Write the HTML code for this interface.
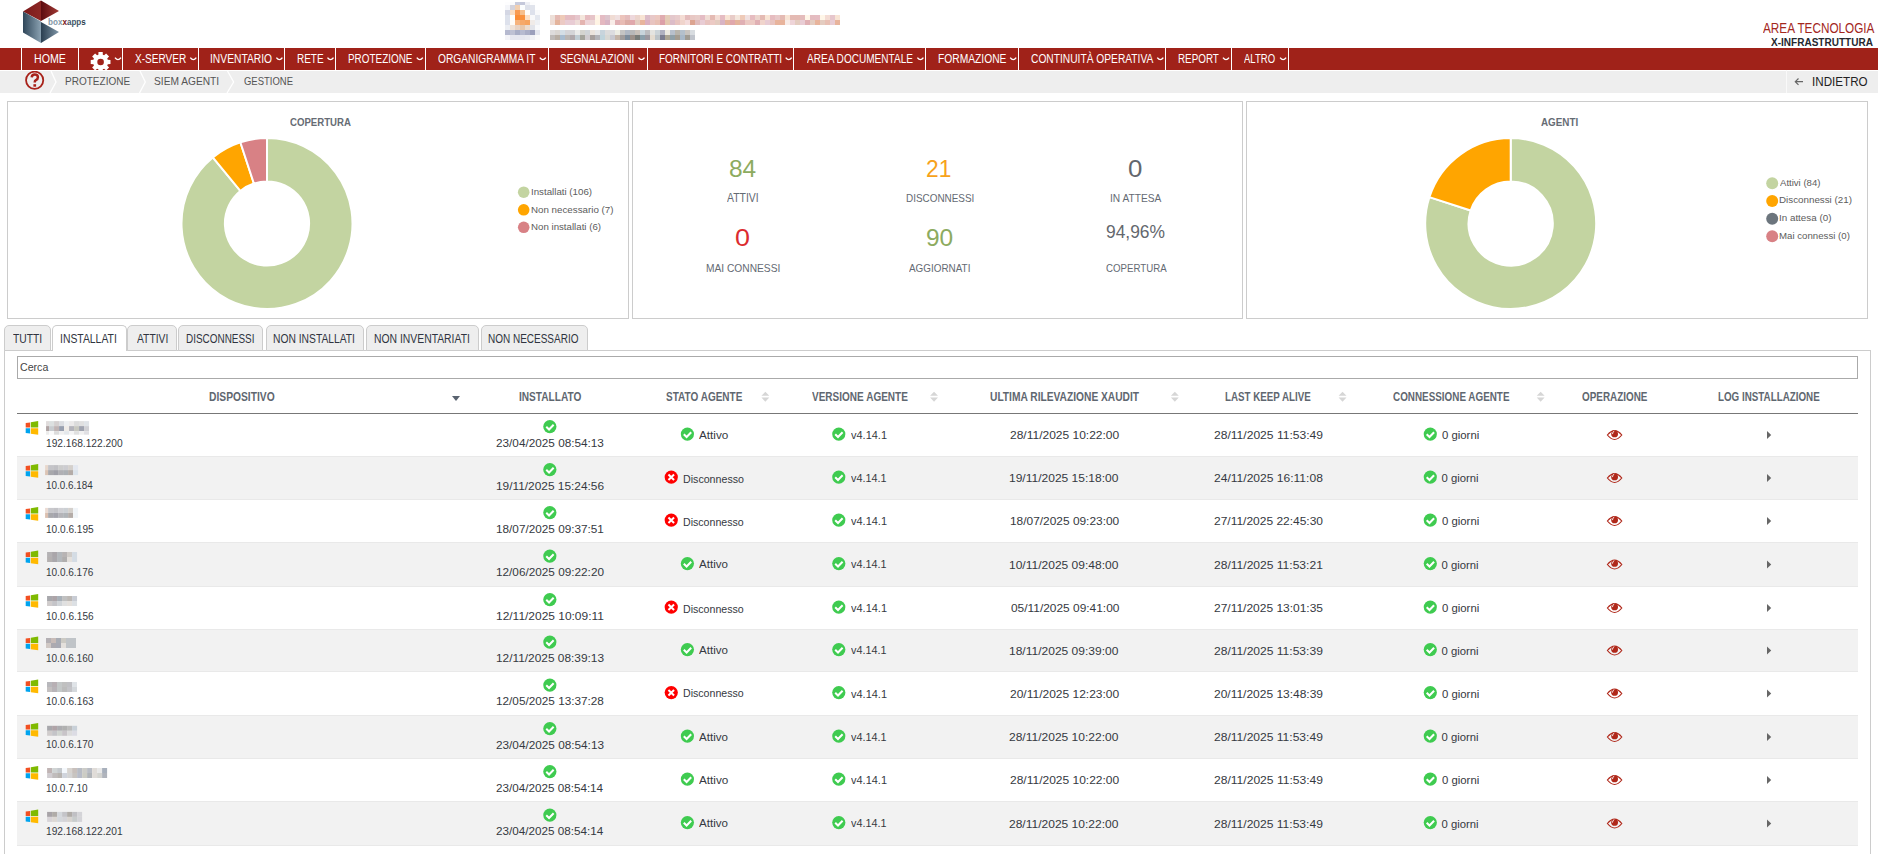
<!DOCTYPE html><html><head><meta charset="utf-8"><style>
html,body{margin:0;padding:0;background:#fff;width:1878px;height:854px;overflow:hidden;position:relative}
.t{position:absolute;white-space:nowrap;font-family:"Liberation Sans",sans-serif;transform-origin:0 0}
</style></head><body>
<svg style="position:absolute;left:0;top:0" width="100" height="48" viewBox="0 0 100 48">
<defs>
<linearGradient id="gl" x1="0" y1="0" x2="1" y2="0"><stop offset="0" stop-color="#2f4659"/><stop offset="1" stop-color="#8aa1b1"/></linearGradient>
<linearGradient id="gr" x1="0" y1="0" x2="1" y2="0"><stop offset="0" stop-color="#2a3e50"/><stop offset="1" stop-color="#8097a8"/></linearGradient>
<linearGradient id="rl" x1="0" y1="0" x2="1" y2="0"><stop offset="0" stop-color="#7a191a"/><stop offset="1" stop-color="#8c2725"/></linearGradient>
<linearGradient id="rr" x1="0" y1="0" x2="1" y2="0"><stop offset="0" stop-color="#5c0c10"/><stop offset="1" stop-color="#a33a35"/></linearGradient>
</defs>
<polygon points="23,11.5 41,0.5 41,21" fill="url(#rl)"/>
<polygon points="41,0.5 59,11 41,21" fill="url(#rr)"/>
<polygon points="23,11.5 41,21.5 41,43 23,32.5" fill="url(#gl)"/>
<polygon points="41,22 59,32 41,43" fill="url(#gr)"/>
</svg>
<div class="t" style="left:48.00px;top:18.26px;font-size:8.90px;line-height:8.90px;font-weight:bold;color:#4d6475;transform:scaleX(0.9121);"><span style="color:#8499a8">box</span><span style="color:#7a1414">x</span><span style="color:#3f5669">app</span><span style="color:#2a3d4d">s</span></div>
<svg style="position:absolute;left:0;top:0" width="900" height="48" shape-rendering="crispEdges"><rect x="505" y="2" width="5" height="3" fill="#fdfdfe"/><rect x="510" y="2" width="5" height="3" fill="#fbfbfc"/><rect x="515" y="2" width="5" height="3" fill="#c8cbdc"/><rect x="520" y="2" width="5" height="3" fill="#c4c8da"/><rect x="525" y="2" width="5" height="3" fill="#eef0f5"/><rect x="530" y="2" width="5" height="3" fill="#fdfdfd"/><rect x="535" y="2" width="5" height="3" fill="#ffffff"/><rect x="505" y="5" width="5" height="5" fill="#f4f5f9"/><rect x="510" y="5" width="5" height="5" fill="#d4d3dc"/><rect x="515" y="5" width="5" height="5" fill="#f2cfb0"/><rect x="520" y="5" width="5" height="5" fill="#fbfdfd"/><rect x="525" y="5" width="5" height="5" fill="#dde1ea"/><rect x="530" y="5" width="5" height="5" fill="#e1e4ec"/><rect x="535" y="5" width="5" height="5" fill="#ffffff"/><rect x="505" y="10" width="5" height="5" fill="#d4d7e4"/><rect x="510" y="10" width="5" height="5" fill="#fbdcc0"/><rect x="515" y="10" width="5" height="5" fill="#f99a50"/><rect x="520" y="10" width="5" height="5" fill="#f6bf8c"/><rect x="525" y="10" width="5" height="5" fill="#fffdfa"/><rect x="530" y="10" width="5" height="5" fill="#dde1ec"/><rect x="535" y="10" width="5" height="5" fill="#f8f9fb"/><rect x="505" y="15" width="5" height="5" fill="#dde2ec"/><rect x="510" y="15" width="5" height="5" fill="#fffefc"/><rect x="515" y="15" width="5" height="5" fill="#fb8c35"/><rect x="520" y="15" width="5" height="5" fill="#f9923e"/><rect x="525" y="15" width="5" height="5" fill="#fce0c6"/><rect x="530" y="15" width="5" height="5" fill="#f8f9fb"/><rect x="535" y="15" width="5" height="5" fill="#e3e7ef"/><rect x="505" y="20" width="5" height="5" fill="#dde1ec"/><rect x="510" y="20" width="5" height="5" fill="#fffcf7"/><rect x="515" y="20" width="5" height="5" fill="#f6b37c"/><rect x="520" y="20" width="5" height="5" fill="#f6a96a"/><rect x="525" y="20" width="5" height="5" fill="#f6a45f"/><rect x="530" y="20" width="5" height="5" fill="#f0ebe8"/><rect x="535" y="20" width="5" height="5" fill="#eef0f4"/><rect x="505" y="25" width="5" height="5" fill="#eceef3"/><rect x="510" y="25" width="5" height="5" fill="#efe2d7"/><rect x="515" y="25" width="5" height="5" fill="#e8d3c3"/><rect x="520" y="25" width="5" height="5" fill="#e8c8ac"/><rect x="525" y="25" width="5" height="5" fill="#ecdccf"/><rect x="530" y="25" width="5" height="5" fill="#e2e4ea"/><rect x="535" y="25" width="5" height="5" fill="#f8f9fb"/><rect x="505" y="30" width="5" height="5" fill="#b5b9cf"/><rect x="510" y="30" width="5" height="5" fill="#bec1d3"/><rect x="515" y="30" width="5" height="5" fill="#a9aec6"/><rect x="520" y="30" width="5" height="5" fill="#b7bbd0"/><rect x="525" y="30" width="5" height="5" fill="#abafc7"/><rect x="530" y="30" width="5" height="5" fill="#9b9fbb"/><rect x="535" y="30" width="5" height="5" fill="#e4e6ee"/><rect x="505" y="35" width="5" height="5" fill="#f3f3f7"/><rect x="510" y="35" width="5" height="5" fill="#e6e7ef"/><rect x="515" y="35" width="5" height="5" fill="#e6e7ef"/><rect x="520" y="35" width="5" height="5" fill="#e6e7ef"/><rect x="525" y="35" width="5" height="5" fill="#e9eaf0"/><rect x="530" y="35" width="5" height="5" fill="#f0f1f5"/><rect x="535" y="35" width="5" height="5" fill="#fafafa"/><rect x="550" y="15" width="5" height="5" fill="#eddfd8"/><rect x="550" y="20" width="5" height="5" fill="#eedcd4"/><rect x="555" y="15" width="5" height="5" fill="#e4bab3"/><rect x="555" y="20" width="5" height="5" fill="#e4b49c"/><rect x="560" y="15" width="5" height="5" fill="#eecab8"/><rect x="560" y="20" width="5" height="5" fill="#eccac4"/><rect x="565" y="15" width="5" height="5" fill="#e5bcc2"/><rect x="565" y="20" width="5" height="5" fill="#e8ccd4"/><rect x="570" y="15" width="5" height="5" fill="#e4bcc0"/><rect x="570" y="20" width="5" height="5" fill="#e8ccd4"/><rect x="575" y="15" width="5" height="5" fill="#e6c6cc"/><rect x="575" y="20" width="5" height="5" fill="#eedcd8"/><rect x="580" y="15" width="5" height="5" fill="#f4e6dc"/><rect x="580" y="20" width="5" height="5" fill="#e4b4b0"/><rect x="585" y="15" width="5" height="5" fill="#e6bcc0"/><rect x="585" y="20" width="5" height="5" fill="#eed4d8"/><rect x="590" y="15" width="5" height="5" fill="#e6c4c8"/><rect x="590" y="20" width="5" height="5" fill="#ecd8d8"/><rect x="595" y="15" width="5" height="5" fill="#fff6e8"/><rect x="595" y="20" width="5" height="5" fill="#fff4e4"/><rect x="600" y="15" width="5" height="5" fill="#e4bcc4"/><rect x="600" y="20" width="5" height="5" fill="#e4b8c0"/><rect x="605" y="15" width="5" height="5" fill="#dcc4cc"/><rect x="605" y="20" width="5" height="5" fill="#d8b4c4"/><rect x="610" y="15" width="5" height="5" fill="#f0dcd4"/><rect x="610" y="20" width="5" height="5" fill="#f8ece8"/><rect x="615" y="15" width="5" height="5" fill="#f0e0e0"/><rect x="615" y="20" width="5" height="5" fill="#e0b0b4"/><rect x="620" y="15" width="5" height="5" fill="#ecc4bc"/><rect x="620" y="20" width="5" height="5" fill="#e8bcb4"/><rect x="625" y="15" width="5" height="5" fill="#e4bcbc"/><rect x="625" y="20" width="5" height="5" fill="#dcaca4"/><rect x="630" y="15" width="5" height="5" fill="#eed8dc"/><rect x="630" y="20" width="5" height="5" fill="#e0a8ac"/><rect x="635" y="15" width="5" height="5" fill="#ecd4cc"/><rect x="635" y="20" width="5" height="5" fill="#e4ccc0"/><rect x="640" y="15" width="5" height="5" fill="#f8e4d4"/><rect x="640" y="20" width="5" height="5" fill="#e8b49c"/><rect x="645" y="15" width="5" height="5" fill="#dcbcc8"/><rect x="645" y="20" width="5" height="5" fill="#dcb0c0"/><rect x="650" y="15" width="5" height="5" fill="#e8c8c8"/><rect x="650" y="20" width="5" height="5" fill="#e8c4c0"/><rect x="655" y="15" width="5" height="5" fill="#ecc8c0"/><rect x="655" y="20" width="5" height="5" fill="#e8c0b4"/><rect x="660" y="15" width="5" height="5" fill="#e0acb0"/><rect x="660" y="20" width="5" height="5" fill="#dca0a8"/><rect x="665" y="15" width="5" height="5" fill="#e4ccb8"/><rect x="665" y="20" width="5" height="5" fill="#e4c8b0"/><rect x="670" y="15" width="5" height="5" fill="#e4c8cc"/><rect x="670" y="20" width="5" height="5" fill="#dcbcc8"/><rect x="675" y="15" width="5" height="5" fill="#e8cccc"/><rect x="675" y="20" width="5" height="5" fill="#e8c4c0"/><rect x="680" y="15" width="5" height="5" fill="#f4dcd4"/><rect x="680" y="20" width="5" height="5" fill="#f0d4cc"/><rect x="685" y="15" width="5" height="5" fill="#e4bcbc"/><rect x="685" y="20" width="5" height="5" fill="#f4dcdc"/><rect x="690" y="15" width="5" height="5" fill="#e8c8c4"/><rect x="690" y="20" width="5" height="5" fill="#dca490"/><rect x="695" y="15" width="5" height="5" fill="#e8ccc8"/><rect x="695" y="20" width="5" height="5" fill="#e0bcbc"/><rect x="700" y="15" width="5" height="5" fill="#e4bcc4"/><rect x="700" y="20" width="5" height="5" fill="#e8ccd4"/><rect x="705" y="15" width="5" height="5" fill="#f0dcd4"/><rect x="705" y="20" width="5" height="5" fill="#e8c4c0"/><rect x="710" y="15" width="5" height="5" fill="#e4bab3"/><rect x="710" y="20" width="5" height="5" fill="#eccac4"/><rect x="715" y="15" width="5" height="5" fill="#f4dcd4"/><rect x="715" y="20" width="5" height="5" fill="#e4ccc0"/><rect x="720" y="15" width="5" height="5" fill="#e5bcc2"/><rect x="720" y="20" width="5" height="5" fill="#d8b4c4"/><rect x="725" y="15" width="5" height="5" fill="#f8e4d4"/><rect x="725" y="20" width="5" height="5" fill="#e4b49c"/><rect x="730" y="15" width="5" height="5" fill="#e8ccc8"/><rect x="730" y="20" width="5" height="5" fill="#e0a8ac"/><rect x="735" y="15" width="5" height="5" fill="#f4e6dc"/><rect x="735" y="20" width="5" height="5" fill="#e4b49c"/><rect x="740" y="15" width="5" height="5" fill="#eecab8"/><rect x="740" y="20" width="5" height="5" fill="#e0b0b4"/><rect x="745" y="15" width="5" height="5" fill="#f0e0e0"/><rect x="745" y="20" width="5" height="5" fill="#eccac4"/><rect x="750" y="15" width="5" height="5" fill="#e6bcc0"/><rect x="750" y="20" width="5" height="5" fill="#eccac4"/><rect x="755" y="15" width="5" height="5" fill="#ecd4cc"/><rect x="755" y="20" width="5" height="5" fill="#e0b0b4"/><rect x="760" y="15" width="5" height="5" fill="#e4bab3"/><rect x="760" y="20" width="5" height="5" fill="#f0d4cc"/><rect x="765" y="15" width="5" height="5" fill="#f8e4d4"/><rect x="765" y="20" width="5" height="5" fill="#e8ccd4"/><rect x="770" y="15" width="5" height="5" fill="#e6bcc0"/><rect x="770" y="20" width="5" height="5" fill="#e8c4c0"/><rect x="775" y="15" width="5" height="5" fill="#e8c8c8"/><rect x="775" y="20" width="5" height="5" fill="#e8b49c"/><rect x="780" y="15" width="5" height="5" fill="#e4bab3"/><rect x="780" y="20" width="5" height="5" fill="#e8b49c"/><rect x="785" y="15" width="5" height="5" fill="#f8e4d4"/><rect x="785" y="20" width="5" height="5" fill="#f8ece8"/><rect x="790" y="15" width="5" height="5" fill="#e4bab3"/><rect x="790" y="20" width="5" height="5" fill="#eed4d8"/><rect x="795" y="15" width="5" height="5" fill="#e4bab3"/><rect x="795" y="20" width="5" height="5" fill="#e4ccc0"/><rect x="800" y="15" width="5" height="5" fill="#e4bcbc"/><rect x="800" y="20" width="5" height="5" fill="#e8ccd4"/><rect x="805" y="15" width="5" height="5" fill="#fff6e8"/><rect x="805" y="20" width="5" height="5" fill="#e0b0b4"/><rect x="810" y="15" width="5" height="5" fill="#e4bcc0"/><rect x="810" y="20" width="5" height="5" fill="#e4ccc0"/><rect x="815" y="15" width="5" height="5" fill="#e5bcc2"/><rect x="815" y="20" width="5" height="5" fill="#e8b49c"/><rect x="820" y="15" width="5" height="5" fill="#fff6e8"/><rect x="820" y="20" width="5" height="5" fill="#e4ccc0"/><rect x="825" y="15" width="5" height="5" fill="#f4dcd4"/><rect x="825" y="20" width="5" height="5" fill="#e8c0b4"/><rect x="830" y="15" width="5" height="5" fill="#e6c6cc"/><rect x="830" y="20" width="5" height="5" fill="#e8ccd4"/><rect x="835" y="15" width="5" height="5" fill="#f8e4d4"/><rect x="835" y="20" width="5" height="5" fill="#e8b49c"/><rect x="550" y="30" width="5" height="5" fill="#dedcdc"/><rect x="550" y="35" width="5" height="5" fill="#bebab8"/><rect x="555" y="30" width="5" height="5" fill="#dad6d2"/><rect x="555" y="35" width="5" height="5" fill="#b8aea4"/><rect x="560" y="30" width="5" height="5" fill="#d4dee6"/><rect x="560" y="35" width="5" height="5" fill="#a8bcd0"/><rect x="565" y="30" width="5" height="5" fill="#d4d4d8"/><rect x="565" y="35" width="5" height="5" fill="#bab6b4"/><rect x="570" y="30" width="5" height="5" fill="#d4d4d8"/><rect x="570" y="35" width="5" height="5" fill="#b0a8ac"/><rect x="575" y="30" width="5" height="5" fill="#eaeaea"/><rect x="575" y="35" width="5" height="5" fill="#c0ccd4"/><rect x="580" y="30" width="5" height="5" fill="#d4d4d0"/><rect x="580" y="35" width="5" height="5" fill="#a4a49c"/><rect x="585" y="30" width="5" height="5" fill="#d0d4d8"/><rect x="585" y="35" width="5" height="5" fill="#d0ccd0"/><rect x="590" y="30" width="5" height="5" fill="#ece4dc"/><rect x="590" y="35" width="5" height="5" fill="#a8a09c"/><rect x="595" y="30" width="5" height="5" fill="#e8e8e8"/><rect x="595" y="35" width="5" height="5" fill="#b4b4b8"/><rect x="600" y="30" width="5" height="5" fill="#c8d4dc"/><rect x="600" y="35" width="5" height="5" fill="#c0d4dc"/><rect x="605" y="30" width="5" height="5" fill="#dcdcdc"/><rect x="605" y="35" width="5" height="5" fill="#d8d8d4"/><rect x="610" y="30" width="5" height="5" fill="#dcdce0"/><rect x="610" y="35" width="5" height="5" fill="#c8c8d0"/><rect x="615" y="30" width="5" height="5" fill="#ecece4"/><rect x="615" y="35" width="5" height="5" fill="#c4b4a8"/><rect x="620" y="30" width="5" height="5" fill="#c4c4c4"/><rect x="620" y="35" width="5" height="5" fill="#a09c9c"/><rect x="625" y="30" width="5" height="5" fill="#b0b8c4"/><rect x="625" y="35" width="5" height="5" fill="#7c8c9c"/><rect x="630" y="30" width="5" height="5" fill="#b8b8b8"/><rect x="630" y="35" width="5" height="5" fill="#9c9088"/><rect x="635" y="30" width="5" height="5" fill="#c8c0b8"/><rect x="635" y="35" width="5" height="5" fill="#787c78"/><rect x="640" y="30" width="5" height="5" fill="#c8d4dc"/><rect x="640" y="35" width="5" height="5" fill="#8ca0ac"/><rect x="645" y="30" width="5" height="5" fill="#bcbcc0"/><rect x="645" y="35" width="5" height="5" fill="#9c98a0"/><rect x="650" y="30" width="5" height="5" fill="#e4e4e0"/><rect x="650" y="35" width="5" height="5" fill="#e4dcd0"/><rect x="655" y="30" width="5" height="5" fill="#ccd4d8"/><rect x="655" y="35" width="5" height="5" fill="#bcc4c8"/><rect x="660" y="30" width="5" height="5" fill="#b0b0c0"/><rect x="660" y="35" width="5" height="5" fill="#7c7c90"/><rect x="665" y="30" width="5" height="5" fill="#ece8e0"/><rect x="665" y="35" width="5" height="5" fill="#aca494"/><rect x="670" y="30" width="5" height="5" fill="#b8c0cc"/><rect x="670" y="35" width="5" height="5" fill="#90a0a8"/><rect x="675" y="30" width="5" height="5" fill="#b8b4ac"/><rect x="675" y="35" width="5" height="5" fill="#a49c90"/><rect x="680" y="30" width="5" height="5" fill="#b4c0cc"/><rect x="680" y="35" width="5" height="5" fill="#a8b8c8"/><rect x="685" y="30" width="5" height="5" fill="#c8c4c0"/><rect x="685" y="35" width="5" height="5" fill="#a09c94"/><rect x="690" y="30" width="5" height="5" fill="#d8dce0"/><rect x="690" y="35" width="5" height="5" fill="#c0c4cc"/></svg>
<div class="t" style="left:1762.62px;top:20.70px;font-size:14.53px;line-height:14.53px;color:#a3271d;transform:scaleX(0.8094);">AREA TECNOLOGIA</div>
<div class="t" style="left:1771.38px;top:36.95px;font-size:10.90px;line-height:10.90px;font-weight:bold;color:#25282e;transform:scaleX(0.9204);">X-INFRASTRUTTURA</div>
<div style="position:absolute;left:0px;top:48px;width:1878px;height:22px;background:#a02219"></div>
<div style="position:absolute;left:21px;top:48px;width:1px;height:22px;background:#fff"></div>
<div style="position:absolute;left:78px;top:48px;width:1px;height:22px;background:#fff"></div>
<div style="position:absolute;left:122px;top:48px;width:1px;height:22px;background:#fff"></div>
<div style="position:absolute;left:198px;top:48px;width:1px;height:22px;background:#fff"></div>
<div style="position:absolute;left:284px;top:48px;width:1px;height:22px;background:#fff"></div>
<div style="position:absolute;left:335px;top:48px;width:1px;height:22px;background:#fff"></div>
<div style="position:absolute;left:425px;top:48px;width:1px;height:22px;background:#fff"></div>
<div style="position:absolute;left:548px;top:48px;width:1px;height:22px;background:#fff"></div>
<div style="position:absolute;left:647px;top:48px;width:1px;height:22px;background:#fff"></div>
<div style="position:absolute;left:793px;top:48px;width:1px;height:22px;background:#fff"></div>
<div style="position:absolute;left:925px;top:48px;width:1px;height:22px;background:#fff"></div>
<div style="position:absolute;left:1018px;top:48px;width:1px;height:22px;background:#fff"></div>
<div style="position:absolute;left:1165px;top:48px;width:1px;height:22px;background:#fff"></div>
<div style="position:absolute;left:1231px;top:48px;width:1px;height:22px;background:#fff"></div>
<div style="position:absolute;left:1288px;top:48px;width:1px;height:22px;background:#fff"></div>
<div class="t" style="left:33.64px;top:53.71px;font-size:11.92px;line-height:11.92px;color:#fff;transform:scaleX(0.8936);">HOME</div>
<div class="t" style="left:134.88px;top:53.71px;font-size:11.92px;line-height:11.92px;color:#fff;transform:scaleX(0.8447);">X-SERVER</div>
<div class="t" style="left:210.02px;top:53.71px;font-size:11.92px;line-height:11.92px;color:#fff;transform:scaleX(0.8631);">INVENTARIO</div>
<div class="t" style="left:296.52px;top:53.71px;font-size:11.92px;line-height:11.92px;color:#fff;transform:scaleX(0.8366);">RETE</div>
<div class="t" style="left:348.20px;top:53.71px;font-size:11.92px;line-height:11.92px;color:#fff;transform:scaleX(0.8321);">PROTEZIONE</div>
<div class="t" style="left:438.12px;top:53.71px;font-size:11.92px;line-height:11.92px;color:#fff;transform:scaleX(0.8563);">ORGANIGRAMMA IT</div>
<div class="t" style="left:560.44px;top:53.71px;font-size:11.92px;line-height:11.92px;color:#fff;transform:scaleX(0.8447);">SEGNALAZIONI</div>
<div class="t" style="left:658.52px;top:53.71px;font-size:11.92px;line-height:11.92px;color:#fff;transform:scaleX(0.8369);">FORNITORI E CONTRATTI</div>
<div class="t" style="left:807.00px;top:53.71px;font-size:11.92px;line-height:11.92px;color:#fff;transform:scaleX(0.8444);">AREA DOCUMENTALE</div>
<div class="t" style="left:937.70px;top:53.71px;font-size:11.92px;line-height:11.92px;color:#fff;transform:scaleX(0.8623);">FORMAZIONE</div>
<div class="t" style="left:1031.12px;top:53.71px;font-size:11.92px;line-height:11.92px;color:#fff;transform:scaleX(0.8586);">CONTINUITÀ  OPERATIVA</div>
<div class="t" style="left:1177.64px;top:53.71px;font-size:11.92px;line-height:11.92px;color:#fff;transform:scaleX(0.8272);">REPORT</div>
<div class="t" style="left:1244.38px;top:53.71px;font-size:11.92px;line-height:11.92px;color:#fff;transform:scaleX(0.8001);">ALTRO</div>
<svg style="position:absolute;left:0;top:0" width="1878" height="80"><path d="M190.3 57.6 Q193.3 61.6 196.3 57.6" stroke="#fff" stroke-width="1.4" fill="none"/><path d="M276.4 57.6 Q279.4 61.6 282.4 57.6" stroke="#fff" stroke-width="1.4" fill="none"/><path d="M327.5 57.6 Q330.5 61.6 333.5 57.6" stroke="#fff" stroke-width="1.4" fill="none"/><path d="M416.8 57.6 Q419.8 61.6 422.8 57.6" stroke="#fff" stroke-width="1.4" fill="none"/><path d="M539.8 57.6 Q542.8 61.6 545.8 57.6" stroke="#fff" stroke-width="1.4" fill="none"/><path d="M638.5 57.6 Q641.5 61.6 644.5 57.6" stroke="#fff" stroke-width="1.4" fill="none"/><path d="M785.7 57.6 Q788.7 61.6 791.7 57.6" stroke="#fff" stroke-width="1.4" fill="none"/><path d="M917.4 57.6 Q920.4 61.6 923.4 57.6" stroke="#fff" stroke-width="1.4" fill="none"/><path d="M1010.2 57.6 Q1013.2 61.6 1016.2 57.6" stroke="#fff" stroke-width="1.4" fill="none"/><path d="M1157.3 57.6 Q1160.3 61.6 1163.3 57.6" stroke="#fff" stroke-width="1.4" fill="none"/><path d="M1223.0 57.6 Q1226.0 61.6 1229.0 57.6" stroke="#fff" stroke-width="1.4" fill="none"/><path d="M1280.1 57.6 Q1283.1 61.6 1286.1 57.6" stroke="#fff" stroke-width="1.4" fill="none"/><path d="M115.0 57.6 Q118.0 61.6 121.0 57.6" stroke="#fff" stroke-width="1.4" fill="none"/></svg>
<svg style="position:absolute;left:0;top:48" width="200" height="22" viewBox="0 48 200 22"><path fill-rule="evenodd" fill="#fff" d="M98.38,54.83 L98.49,52.12 L102.71,52.12 L102.82,54.83 L104.10,55.37 L106.10,53.53 L109.07,56.50 L107.23,58.50 L107.77,59.78 L110.48,59.89 L110.48,64.11 L107.77,64.22 L107.23,65.50 L109.07,67.50 L106.10,70.47 L104.10,68.63 L102.82,69.17 L102.71,71.88 L98.49,71.88 L98.38,69.17 L97.10,68.63 L95.10,70.47 L92.13,67.50 L93.97,65.50 L93.43,64.22 L90.72,64.11 L90.72,59.89 L93.43,59.78 L93.97,58.50 L92.13,56.50 L95.10,53.53 L97.10,55.37 Z M103.89999999999999,62.0 A3.3,3.3 0 1 0 97.3,62.0 A3.3,3.3 0 1 0 103.89999999999999,62.0 Z"/></svg>
<div style="position:absolute;left:0px;top:71px;width:1878px;height:22px;background:#eeeeee"></div>
<svg style="position:absolute;left:0;top:71" width="300" height="22" viewBox="0 71 300 22">
<circle cx="34.65" cy="80.25" r="8.6" stroke="#a8221a" stroke-width="1.8" fill="none"/><path d="M31.7,77.3 Q31.9,74.6 34.7,74.6 Q37.9,74.6 37.9,77.3 Q37.9,79.3 35.9,80.2 Q34.7,80.8 34.7,82.4" stroke="#a8221a" stroke-width="2.5" fill="none"/><rect x="33.4" y="84.2" width="2.7" height="2.5" fill="#a8221a"/>
<path d="M51 71 L56 82 L50 93 M140 71 L145.3 82 L139.5 93 M227.5 71 L233.6 82 L227 93" stroke="#fff" stroke-width="1.3" fill="none"/>
</svg>
<div class="t" style="left:65.46px;top:75.16px;font-size:11.63px;line-height:11.63px;color:#555;transform:scaleX(0.8621);">PROTEZIONE</div>
<div class="t" style="left:154.08px;top:75.16px;font-size:11.63px;line-height:11.63px;color:#555;transform:scaleX(0.8771);">SIEM AGENTI</div>
<div class="t" style="left:244.00px;top:75.16px;font-size:11.63px;line-height:11.63px;color:#555;transform:scaleX(0.8154);">GESTIONE</div>
<div style="position:absolute;left:1786px;top:70px;width:1px;height:23px;background:#f9f9f9"></div>
<svg style="position:absolute;left:1790px;top:76px" width="20" height="12"><path d="M5.5 5.7 H13 M8.5 2.5 L5.3 5.7 L8.5 8.9" stroke="#666" stroke-width="1.2" fill="none"/></svg>
<div class="t" style="left:1811.76px;top:75.91px;font-size:12.94px;line-height:12.94px;color:#222;transform:scaleX(0.8995);">INDIETRO</div>
<div style="position:absolute;left:7px;top:101px;width:622px;height:218px;box-sizing:border-box;border:1px solid #ccc"></div>
<div style="position:absolute;left:632px;top:101px;width:611px;height:218px;box-sizing:border-box;border:1px solid #ccc"></div>
<div style="position:absolute;left:1246px;top:101px;width:622px;height:218px;box-sizing:border-box;border:1px solid #ccc"></div>
<div class="t" style="left:289.80px;top:118.06px;font-size:10.32px;line-height:10.32px;font-weight:bold;color:#666c74;transform:scaleX(0.9322);">COPERTURA</div>
<div class="t" style="left:1540.60px;top:117.47px;font-size:10.90px;line-height:10.90px;font-weight:bold;color:#666c74;transform:scaleX(0.9046);">AGENTI</div>
<svg style="position:absolute;left:0;top:0" width="1878" height="330"><path d="M267.00,138.00 A85.5,85.5 0 1 1 212.81,157.36 L240.32,190.93 A42.1,42.1 0 1 0 267.00,181.40 Z" fill="#c3d4a1" stroke="#fff" stroke-width="2" stroke-linejoin="bevel"/><path d="M212.81,157.36 A85.5,85.5 0 0 1 240.36,142.25 L253.88,183.50 A42.1,42.1 0 0 0 240.32,190.93 Z" fill="#ffa500" stroke="#fff" stroke-width="2" stroke-linejoin="bevel"/><path d="M240.36,142.25 A85.5,85.5 0 0 1 267.00,138.00 L267.00,181.40 A42.1,42.1 0 0 0 253.88,183.50 Z" fill="#d88185" stroke="#fff" stroke-width="2" stroke-linejoin="bevel"/><path d="M1510.70,138.00 A85.5,85.5 0 1 1 1429.38,197.08 L1470.66,210.49 A42.1,42.1 0 1 0 1510.70,181.40 Z" fill="#c3d4a1" stroke="#fff" stroke-width="2" stroke-linejoin="bevel"/><path d="M1429.38,197.08 A85.5,85.5 0 0 1 1510.70,138.00 L1510.70,181.40 A42.1,42.1 0 0 0 1470.66,210.49 Z" fill="#ffa500" stroke="#fff" stroke-width="2" stroke-linejoin="bevel"/><circle cx="523.7" cy="192.2" r="5.8" fill="#c3d4a1"/><circle cx="523.7" cy="209.8" r="5.8" fill="#ffa500"/><circle cx="523.7" cy="227.3" r="5.8" fill="#d88185"/><circle cx="1772.2" cy="183.3" r="6" fill="#c3d4a1"/><circle cx="1772.2" cy="201" r="6" fill="#ffa500"/><circle cx="1772.2" cy="218.8" r="6" fill="#6c757d"/><circle cx="1772.2" cy="236.3" r="6" fill="#d88185"/></svg>
<div class="t" style="left:530.76px;top:188.05px;font-size:9.30px;line-height:9.30px;color:#5c5c5c;transform:scaleX(1.0458);">Installati (106)</div>
<div class="t" style="left:530.76px;top:204.66px;font-size:9.45px;line-height:9.45px;color:#5c5c5c;transform:scaleX(1.0344);">Non necessario (7)</div>
<div class="t" style="left:530.76px;top:222.95px;font-size:8.87px;line-height:8.87px;color:#5c5c5c;transform:scaleX(1.0942);">Non installati (6)</div>
<div class="t" style="left:1779.66px;top:177.66px;font-size:9.45px;line-height:9.45px;color:#5c5c5c;transform:scaleX(1.0147);">Attivi (84)</div>
<div class="t" style="left:1778.86px;top:195.44px;font-size:9.45px;line-height:9.45px;color:#5c5c5c;transform:scaleX(1.0376);">Disconnessi (21)</div>
<div class="t" style="left:1778.86px;top:213.00px;font-size:9.45px;line-height:9.45px;color:#5c5c5c;transform:scaleX(1.0407);">In attesa (0)</div>
<div class="t" style="left:1778.86px;top:230.78px;font-size:9.45px;line-height:9.45px;color:#5c5c5c;transform:scaleX(1.0239);">Mai connessi (0)</div>
<div class="t" style="left:728.50px;top:157.51px;font-size:23.02px;line-height:23.02px;color:#8dab5f;transform:scaleX(1.0633);">84</div>
<div class="t" style="left:925.70px;top:157.51px;font-size:23.02px;line-height:23.02px;color:#f7a21b;transform:scaleX(0.9889);">21</div>
<div class="t" style="left:1128.30px;top:157.51px;font-size:23.02px;line-height:23.02px;color:#63676d;transform:scaleX(1.1221);">0</div>
<div class="t" style="left:735.30px;top:226.51px;font-size:23.02px;line-height:23.02px;color:#dc2b30;transform:scaleX(1.1672);">0</div>
<div class="t" style="left:925.60px;top:226.51px;font-size:23.02px;line-height:23.02px;color:#8dab5f;transform:scaleX(1.0633);">90</div>
<div class="t" style="left:1105.90px;top:224.07px;font-size:17.51px;line-height:17.51px;color:#63676d;transform:scaleX(0.9943);">94,96%</div>
<div class="t" style="left:727.40px;top:192.71px;font-size:11.92px;line-height:11.92px;color:#646a73;transform:scaleX(0.8746);">ATTIVI</div>
<div class="t" style="left:905.80px;top:192.78px;font-size:11.48px;line-height:11.48px;color:#646a73;transform:scaleX(0.8645);">DISCONNESSI</div>
<div class="t" style="left:1109.70px;top:192.78px;font-size:11.48px;line-height:11.48px;color:#646a73;transform:scaleX(0.8896);">IN ATTESA</div>
<div class="t" style="left:705.70px;top:261.53px;font-size:11.77px;line-height:11.77px;color:#646a73;transform:scaleX(0.8680);">MAI CONNESSI</div>
<div class="t" style="left:909.20px;top:261.53px;font-size:11.77px;line-height:11.77px;color:#646a73;transform:scaleX(0.8411);">AGGIORNATI</div>
<div class="t" style="left:1105.50px;top:261.53px;font-size:11.77px;line-height:11.77px;color:#646a73;transform:scaleX(0.8226);">COPERTURA</div>
<div style="position:absolute;left:4px;top:350px;width:1867px;height:520px;box-sizing:border-box;border:1px solid #ccc"></div>
<div style="position:absolute;left:4px;top:325px;width:47px;height:26px;box-sizing:border-box;border:1px solid #ccc;border-radius:5px 5px 0 0;background:#eee"></div>
<div class="t" style="left:13.00px;top:332.62px;font-size:12.50px;line-height:12.50px;color:#2f3440;transform:scaleX(0.8234);">TUTTI</div>
<div style="position:absolute;left:52px;top:325px;width:75px;height:26px;box-sizing:border-box;border:1px solid #ccc;border-bottom:none;border-radius:5px 5px 0 0;background:#fff"></div>
<div class="t" style="left:60.30px;top:332.62px;font-size:12.50px;line-height:12.50px;color:#2f3440;transform:scaleX(0.8315);">INSTALLATI</div>
<div style="position:absolute;left:127px;top:325px;width:50px;height:26px;box-sizing:border-box;border:1px solid #ccc;border-radius:5px 5px 0 0;background:#eee"></div>
<div class="t" style="left:136.60px;top:332.62px;font-size:12.50px;line-height:12.50px;color:#2f3440;transform:scaleX(0.8245);">ATTIVI</div>
<div style="position:absolute;left:178px;top:325px;width:85px;height:26px;box-sizing:border-box;border:1px solid #ccc;border-radius:5px 5px 0 0;background:#eee"></div>
<div class="t" style="left:185.70px;top:332.62px;font-size:12.50px;line-height:12.50px;color:#2f3440;transform:scaleX(0.7949);">DISCONNESSI</div>
<div style="position:absolute;left:266px;top:325px;width:98px;height:26px;box-sizing:border-box;border:1px solid #ccc;border-radius:5px 5px 0 0;background:#eee"></div>
<div class="t" style="left:273.10px;top:332.62px;font-size:12.50px;line-height:12.50px;color:#2f3440;transform:scaleX(0.8233);">NON INSTALLATI</div>
<div style="position:absolute;left:366px;top:325px;width:113px;height:26px;box-sizing:border-box;border:1px solid #ccc;border-radius:5px 5px 0 0;background:#eee"></div>
<div class="t" style="left:374.00px;top:332.62px;font-size:12.50px;line-height:12.50px;color:#2f3440;transform:scaleX(0.8298);">NON INVENTARIATI</div>
<div style="position:absolute;left:481px;top:325px;width:107px;height:26px;box-sizing:border-box;border:1px solid #ccc;border-radius:5px 5px 0 0;background:#eee"></div>
<div class="t" style="left:488.40px;top:332.62px;font-size:12.50px;line-height:12.50px;color:#2f3440;transform:scaleX(0.7989);">NON NECESSARIO</div>
<div style="position:absolute;left:17px;top:356px;width:1841px;height:23px;box-sizing:border-box;border:1px solid #aaa;background:#fff"></div>
<div class="t" style="left:20.00px;top:361.86px;font-size:11.34px;line-height:11.34px;color:#444;transform:scaleX(0.9375);">Cerca</div>
<div class="t" style="left:208.90px;top:391.71px;font-size:11.92px;line-height:11.92px;font-weight:bold;color:#5f6770;transform:scaleX(0.8631);">DISPOSITIVO</div>
<div class="t" style="left:518.90px;top:391.71px;font-size:11.92px;line-height:11.92px;font-weight:bold;color:#5f6770;transform:scaleX(0.8486);">INSTALLATO</div>
<div class="t" style="left:666.20px;top:391.71px;font-size:11.92px;line-height:11.92px;font-weight:bold;color:#5f6770;transform:scaleX(0.8405);">STATO AGENTE</div>
<div class="t" style="left:811.90px;top:391.71px;font-size:11.92px;line-height:11.92px;font-weight:bold;color:#5f6770;transform:scaleX(0.8412);">VERSIONE AGENTE</div>
<div class="t" style="left:989.60px;top:391.71px;font-size:11.92px;line-height:11.92px;font-weight:bold;color:#5f6770;transform:scaleX(0.8580);">ULTIMA RILEVAZIONE XAUDIT</div>
<div class="t" style="left:1225.00px;top:391.71px;font-size:11.92px;line-height:11.92px;font-weight:bold;color:#5f6770;transform:scaleX(0.8201);">LAST KEEP ALIVE</div>
<div class="t" style="left:1392.90px;top:391.71px;font-size:11.92px;line-height:11.92px;font-weight:bold;color:#5f6770;transform:scaleX(0.8293);">CONNESSIONE AGENTE</div>
<div class="t" style="left:1582.20px;top:391.71px;font-size:11.92px;line-height:11.92px;font-weight:bold;color:#5f6770;transform:scaleX(0.8314);">OPERAZIONE</div>
<div class="t" style="left:1717.60px;top:391.71px;font-size:11.92px;line-height:11.92px;font-weight:bold;color:#5f6770;transform:scaleX(0.8237);">LOG INSTALLAZIONE</div>
<svg style="position:absolute;left:0;top:0" width="1878" height="420"><path d="M761.4,395.8 L765.35,391.8 L769.3,395.8 Z M761.4,397.6 L769.3,397.6 L765.35,401.8 Z" fill="#d6d6d6"/><path d="M930.1,395.8 L934.05,391.8 L938.0,395.8 Z M930.1,397.6 L938.0,397.6 L934.05,401.8 Z" fill="#d6d6d6"/><path d="M1170.9,395.8 L1174.85,391.8 L1178.8,395.8 Z M1170.9,397.6 L1178.8,397.6 L1174.85,401.8 Z" fill="#d6d6d6"/><path d="M1338.6,395.8 L1342.55,391.8 L1346.5,395.8 Z M1338.6,397.6 L1346.5,397.6 L1342.55,401.8 Z" fill="#d6d6d6"/><path d="M1536.7,395.8 L1540.65,391.8 L1544.6,395.8 Z M1536.7,397.6 L1544.6,397.6 L1540.65,401.8 Z" fill="#d6d6d6"/><path d="M452,396 L460,396 L456,401 Z" fill="#5a6370"/></svg>
<div style="position:absolute;left:17px;top:413px;width:1841px;height:1px;background:#777"></div>
<svg style="position:absolute;left:0;top:0" width="1878" height="854"><rect x="17" y="456" width="1841" height="44" fill="#f2f2f2"/><rect x="17" y="456" width="1841" height="1" fill="#e9e9e9"/><rect x="17" y="499" width="1841" height="1" fill="#e9e9e9"/><rect x="17" y="542" width="1841" height="45" fill="#f2f2f2"/><rect x="17" y="542" width="1841" height="1" fill="#e9e9e9"/><rect x="17" y="586" width="1841" height="1" fill="#e9e9e9"/><rect x="17" y="629" width="1841" height="43" fill="#f2f2f2"/><rect x="17" y="629" width="1841" height="1" fill="#e9e9e9"/><rect x="17" y="671" width="1841" height="1" fill="#e9e9e9"/><rect x="17" y="715" width="1841" height="44" fill="#f2f2f2"/><rect x="17" y="715" width="1841" height="1" fill="#e9e9e9"/><rect x="17" y="758" width="1841" height="1" fill="#e9e9e9"/><rect x="17" y="801" width="1841" height="45" fill="#f2f2f2"/><rect x="17" y="801" width="1841" height="1" fill="#e9e9e9"/><rect x="17" y="845" width="1841" height="1" fill="#e9e9e9"/><path d="M25.7,423.0 L30.1,422.4 L30.1,427.5 L25.7,427.5 Z" fill="#f25022"/><path d="M30.799999999999997,422.3 L38.2,421.1 L38.2,427.5 L30.799999999999997,427.5 Z" fill="#7fba00"/><path d="M25.7,428.3 L30.1,428.3 L30.1,433.6 L25.7,433.0 Z" fill="#00a4ef"/><path d="M30.799999999999997,428.3 L38.2,428.3 L38.2,434.8 L30.799999999999997,433.7 Z" fill="#ffb900"/><rect x="46.06" y="421.10" width="3" height="5" fill="#e0dcdc"/><rect x="49.06" y="421.10" width="5" height="5" fill="#dce0e0"/><rect x="54.06" y="421.10" width="5" height="5" fill="#d4d0d0"/><rect x="59.06" y="421.10" width="5" height="5" fill="#dcdee2"/><rect x="64.06" y="421.10" width="5" height="5" fill="#eef0f2"/><rect x="69.06" y="421.10" width="5" height="5" fill="#eceaea"/><rect x="74.06" y="421.10" width="5" height="5" fill="#dcdcdc"/><rect x="79.06" y="421.10" width="5" height="5" fill="#e0e0e0"/><rect x="84.06" y="421.10" width="5" height="5" fill="#e0e4e8"/><rect x="46.06" y="426.10" width="3" height="5" fill="#b0a4a4"/><rect x="49.06" y="426.10" width="5" height="5" fill="#c8ccd0"/><rect x="54.06" y="426.10" width="5" height="5" fill="#c0b4b4"/><rect x="59.06" y="426.10" width="5" height="5" fill="#98a0b0"/><rect x="64.06" y="426.10" width="5" height="5" fill="#f0ece8"/><rect x="69.06" y="426.10" width="5" height="5" fill="#b4b4bc"/><rect x="74.06" y="426.10" width="5" height="5" fill="#c8c8c0"/><rect x="79.06" y="426.10" width="5" height="5" fill="#a0a4b0"/><rect x="84.06" y="426.10" width="5" height="5" fill="#d0d0d4"/><rect x="46.06" y="431.10" width="3" height="3.6" fill="#ececec"/><rect x="49.06" y="431.10" width="5" height="3.6" fill="#fafafa"/><rect x="54.06" y="431.10" width="5" height="3.6" fill="#dcdcdc"/><rect x="59.06" y="431.10" width="5" height="3.6" fill="#f0f0f0"/><rect x="64.06" y="431.10" width="5" height="3.6" fill="#e4e8ec"/><rect x="69.06" y="431.10" width="5" height="3.6" fill="#f4f4f4"/><rect x="74.06" y="431.10" width="5" height="3.6" fill="#e0e0e0"/><rect x="79.06" y="431.10" width="5" height="3.6" fill="#f0f0f0"/><rect x="84.06" y="431.10" width="5" height="3.6" fill="#e0e0e4"/><circle cx="549.85" cy="426.60" r="6.6" fill="#3fcb50"/><path d="M546.25,426.70 L549.05,429.50 L553.65,424.70" stroke="#fff" stroke-width="2" fill="none"/><circle cx="687.40" cy="434.10" r="6.6" fill="#3fcb50"/><path d="M683.80,434.20 L686.60,437.00 L691.20,432.20" stroke="#fff" stroke-width="2" fill="none"/><circle cx="838.80" cy="434.10" r="6.6" fill="#3fcb50"/><path d="M835.20,434.20 L838.00,437.00 L842.60,432.20" stroke="#fff" stroke-width="2" fill="none"/><circle cx="1430.30" cy="434.10" r="6.6" fill="#3fcb50"/><path d="M1426.70,434.20 L1429.50,437.00 L1434.10,432.20" stroke="#fff" stroke-width="2" fill="none"/><path d="M1607.40,435.00 Q1614.60,426.10 1621.80,435.00 Q1614.60,443.90 1607.40,435.00 Z" stroke="#b0281a" stroke-width="1.15" fill="none"/><circle cx="1614.60" cy="433.90" r="3.4" fill="#b0281a"/><path d="M1612.50,434.10 Q1612.50,431.70 1614.30,431.10" stroke="#fff" stroke-width="0.9" fill="none"/><path d="M1767,431.0 L1771.2,435.0 L1767,439.0 Z" fill="#666"/><path d="M25.7,466.0 L30.1,465.4 L30.1,470.5 L25.7,470.5 Z" fill="#f25022"/><path d="M30.799999999999997,465.3 L38.2,464.1 L38.2,470.5 L30.799999999999997,470.5 Z" fill="#7fba00"/><path d="M25.7,471.3 L30.1,471.3 L30.1,476.6 L25.7,476.0 Z" fill="#00a4ef"/><path d="M30.799999999999997,471.3 L38.2,471.3 L38.2,477.8 L30.799999999999997,476.7 Z" fill="#ffb900"/><rect x="45.10" y="465.10" width="3" height="5" fill="#e8d8cc"/><rect x="48.10" y="465.10" width="5" height="5" fill="#c4c4c8"/><rect x="53.10" y="465.10" width="5" height="5" fill="#c0c0c4"/><rect x="58.10" y="465.10" width="5" height="5" fill="#cccccc"/><rect x="63.10" y="465.10" width="5" height="5" fill="#ccccd0"/><rect x="68.10" y="465.10" width="5" height="5" fill="#d4d0cc"/><rect x="73.10" y="465.10" width="5" height="5" fill="#e4e8f0"/><rect x="45.10" y="470.10" width="3" height="5" fill="#dcc4b4"/><rect x="48.10" y="470.10" width="5" height="5" fill="#a8a8ac"/><rect x="53.10" y="470.10" width="5" height="5" fill="#a0a0a8"/><rect x="58.10" y="470.10" width="5" height="5" fill="#b0b0b4"/><rect x="63.10" y="470.10" width="5" height="5" fill="#acb0b4"/><rect x="68.10" y="470.10" width="5" height="5" fill="#b4aca8"/><rect x="73.10" y="470.10" width="5" height="5" fill="#dce4ec"/><circle cx="549.85" cy="469.60" r="6.6" fill="#3fcb50"/><path d="M546.25,469.70 L549.05,472.50 L553.65,467.70" stroke="#fff" stroke-width="2" fill="none"/><circle cx="671.25" cy="477.10" r="6.6" fill="#ff0000"/><path d="M668.45,474.50 L674.05,480.00 M674.05,474.50 L668.45,480.00" stroke="#fff" stroke-width="2" fill="none"/><circle cx="838.80" cy="477.10" r="6.6" fill="#3fcb50"/><path d="M835.20,477.20 L838.00,480.00 L842.60,475.20" stroke="#fff" stroke-width="2" fill="none"/><circle cx="1430.30" cy="477.10" r="6.6" fill="#3fcb50"/><path d="M1426.70,477.20 L1429.50,480.00 L1434.10,475.20" stroke="#fff" stroke-width="2" fill="none"/><path d="M1607.40,478.00 Q1614.60,469.10 1621.80,478.00 Q1614.60,486.90 1607.40,478.00 Z" stroke="#b0281a" stroke-width="1.15" fill="none"/><circle cx="1614.60" cy="476.90" r="3.4" fill="#b0281a"/><path d="M1612.50,477.10 Q1612.50,474.70 1614.30,474.10" stroke="#fff" stroke-width="0.9" fill="none"/><path d="M1767,474.0 L1771.2,478.0 L1767,482.0 Z" fill="#666"/><path d="M25.7,509.0 L30.1,508.4 L30.1,513.5 L25.7,513.5 Z" fill="#f25022"/><path d="M30.799999999999997,508.3 L38.2,507.1 L38.2,513.5 L30.799999999999997,513.5 Z" fill="#7fba00"/><path d="M25.7,514.3 L30.1,514.3 L30.1,519.6 L25.7,519.0 Z" fill="#00a4ef"/><path d="M30.799999999999997,514.3 L38.2,514.3 L38.2,520.8 L30.799999999999997,519.7 Z" fill="#ffb900"/><rect x="45.10" y="507.90" width="3" height="5" fill="#ecdcd4"/><rect x="48.10" y="507.90" width="5" height="5" fill="#c8c8cc"/><rect x="53.10" y="507.90" width="5" height="5" fill="#c4c4c8"/><rect x="58.10" y="507.90" width="5" height="5" fill="#d0d0d4"/><rect x="63.10" y="507.90" width="5" height="5" fill="#ccd0d4"/><rect x="68.10" y="507.90" width="5" height="5" fill="#d4d0cc"/><rect x="73.10" y="507.90" width="5" height="5" fill="#f0f4f8"/><rect x="45.10" y="512.90" width="3" height="5" fill="#dcc0b0"/><rect x="48.10" y="512.90" width="5" height="5" fill="#a8a8ac"/><rect x="53.10" y="512.90" width="5" height="5" fill="#a4a4ac"/><rect x="58.10" y="512.90" width="5" height="5" fill="#b4b4b8"/><rect x="63.10" y="512.90" width="5" height="5" fill="#b0b4b8"/><rect x="68.10" y="512.90" width="5" height="5" fill="#b4aca8"/><rect x="73.10" y="512.90" width="5" height="5" fill="#f0f4f8"/><circle cx="549.85" cy="512.60" r="6.6" fill="#3fcb50"/><path d="M546.25,512.70 L549.05,515.50 L553.65,510.70" stroke="#fff" stroke-width="2" fill="none"/><circle cx="671.25" cy="520.10" r="6.6" fill="#ff0000"/><path d="M668.45,517.50 L674.05,523.00 M674.05,517.50 L668.45,523.00" stroke="#fff" stroke-width="2" fill="none"/><circle cx="838.80" cy="520.10" r="6.6" fill="#3fcb50"/><path d="M835.20,520.20 L838.00,523.00 L842.60,518.20" stroke="#fff" stroke-width="2" fill="none"/><circle cx="1430.30" cy="520.10" r="6.6" fill="#3fcb50"/><path d="M1426.70,520.20 L1429.50,523.00 L1434.10,518.20" stroke="#fff" stroke-width="2" fill="none"/><path d="M1607.40,521.00 Q1614.60,512.10 1621.80,521.00 Q1614.60,529.90 1607.40,521.00 Z" stroke="#b0281a" stroke-width="1.15" fill="none"/><circle cx="1614.60" cy="519.90" r="3.4" fill="#b0281a"/><path d="M1612.50,520.10 Q1612.50,517.70 1614.30,517.10" stroke="#fff" stroke-width="0.9" fill="none"/><path d="M1767,517.0 L1771.2,521.0 L1767,525.0 Z" fill="#666"/><path d="M25.7,552.5 L30.1,551.9 L30.1,557.0 L25.7,557.0 Z" fill="#f25022"/><path d="M30.799999999999997,551.8 L38.2,550.6 L38.2,557.0 L30.799999999999997,557.0 Z" fill="#7fba00"/><path d="M25.7,557.8 L30.1,557.8 L30.1,563.1 L25.7,562.5 Z" fill="#00a4ef"/><path d="M30.799999999999997,557.8 L38.2,557.8 L38.2,564.3 L30.799999999999997,563.2 Z" fill="#ffb900"/><rect x="47.06" y="552.00" width="5" height="5" fill="#b4b2b4"/><rect x="52.06" y="552.00" width="5" height="5" fill="#aaa6aa"/><rect x="57.06" y="552.00" width="5" height="5" fill="#b4b8bc"/><rect x="62.06" y="552.00" width="5" height="5" fill="#b8b4b4"/><rect x="67.06" y="552.00" width="5" height="5" fill="#d0ccc8"/><rect x="72.06" y="552.00" width="5" height="5" fill="#d4dce4"/><rect x="47.06" y="557.00" width="5" height="5" fill="#b4b0b0"/><rect x="52.06" y="557.00" width="5" height="5" fill="#aaa8ac"/><rect x="57.06" y="557.00" width="5" height="5" fill="#b4b8bc"/><rect x="62.06" y="557.00" width="5" height="5" fill="#b0aeae"/><rect x="67.06" y="557.00" width="5" height="5" fill="#e4e0dc"/><rect x="72.06" y="557.00" width="5" height="5" fill="#d4dce4"/><circle cx="549.85" cy="556.10" r="6.6" fill="#3fcb50"/><path d="M546.25,556.20 L549.05,559.00 L553.65,554.20" stroke="#fff" stroke-width="2" fill="none"/><circle cx="687.40" cy="563.60" r="6.6" fill="#3fcb50"/><path d="M683.80,563.70 L686.60,566.50 L691.20,561.70" stroke="#fff" stroke-width="2" fill="none"/><circle cx="838.80" cy="563.60" r="6.6" fill="#3fcb50"/><path d="M835.20,563.70 L838.00,566.50 L842.60,561.70" stroke="#fff" stroke-width="2" fill="none"/><circle cx="1430.30" cy="563.60" r="6.6" fill="#3fcb50"/><path d="M1426.70,563.70 L1429.50,566.50 L1434.10,561.70" stroke="#fff" stroke-width="2" fill="none"/><path d="M1607.40,564.50 Q1614.60,555.60 1621.80,564.50 Q1614.60,573.40 1607.40,564.50 Z" stroke="#b0281a" stroke-width="1.15" fill="none"/><circle cx="1614.60" cy="563.40" r="3.4" fill="#b0281a"/><path d="M1612.50,563.60 Q1612.50,561.20 1614.30,560.60" stroke="#fff" stroke-width="0.9" fill="none"/><path d="M1767,560.5 L1771.2,564.5 L1767,568.5 Z" fill="#666"/><path d="M25.7,596.0 L30.1,595.4 L30.1,600.5 L25.7,600.5 Z" fill="#f25022"/><path d="M30.799999999999997,595.3 L38.2,594.1 L38.2,600.5 L30.799999999999997,600.5 Z" fill="#7fba00"/><path d="M25.7,601.3 L30.1,601.3 L30.1,606.6 L25.7,606.0 Z" fill="#00a4ef"/><path d="M30.799999999999997,601.3 L38.2,601.3 L38.2,607.8 L30.799999999999997,606.7 Z" fill="#ffb900"/><rect x="47.06" y="596.00" width="5" height="5" fill="#a8a8ac"/><rect x="52.06" y="596.00" width="5" height="5" fill="#aca4a8"/><rect x="57.06" y="596.00" width="5" height="5" fill="#a8b0b8"/><rect x="62.06" y="596.00" width="5" height="5" fill="#c0c0c0"/><rect x="67.06" y="596.00" width="5" height="5" fill="#bcb8b4"/><rect x="72.06" y="596.00" width="5" height="5" fill="#c8ccd4"/><rect x="47.06" y="601.00" width="5" height="5" fill="#d0cccc"/><rect x="52.06" y="601.00" width="5" height="5" fill="#c4c4c8"/><rect x="57.06" y="601.00" width="5" height="5" fill="#d0d4d8"/><rect x="62.06" y="601.00" width="5" height="5" fill="#e0e0e0"/><rect x="67.06" y="601.00" width="5" height="5" fill="#e4e0dc"/><rect x="72.06" y="601.00" width="5" height="5" fill="#dce0e4"/><circle cx="549.85" cy="599.60" r="6.6" fill="#3fcb50"/><path d="M546.25,599.70 L549.05,602.50 L553.65,597.70" stroke="#fff" stroke-width="2" fill="none"/><circle cx="671.25" cy="607.10" r="6.6" fill="#ff0000"/><path d="M668.45,604.50 L674.05,610.00 M674.05,604.50 L668.45,610.00" stroke="#fff" stroke-width="2" fill="none"/><circle cx="838.80" cy="607.10" r="6.6" fill="#3fcb50"/><path d="M835.20,607.20 L838.00,610.00 L842.60,605.20" stroke="#fff" stroke-width="2" fill="none"/><circle cx="1430.30" cy="607.10" r="6.6" fill="#3fcb50"/><path d="M1426.70,607.20 L1429.50,610.00 L1434.10,605.20" stroke="#fff" stroke-width="2" fill="none"/><path d="M1607.40,608.00 Q1614.60,599.10 1621.80,608.00 Q1614.60,616.90 1607.40,608.00 Z" stroke="#b0281a" stroke-width="1.15" fill="none"/><circle cx="1614.60" cy="606.90" r="3.4" fill="#b0281a"/><path d="M1612.50,607.10 Q1612.50,604.70 1614.30,604.10" stroke="#fff" stroke-width="0.9" fill="none"/><path d="M1767,604.0 L1771.2,608.0 L1767,612.0 Z" fill="#666"/><path d="M25.7,638.5 L30.1,637.9 L30.1,643.0 L25.7,643.0 Z" fill="#f25022"/><path d="M30.799999999999997,637.8 L38.2,636.6 L38.2,643.0 L30.799999999999997,643.0 Z" fill="#7fba00"/><path d="M25.7,643.8 L30.1,643.8 L30.1,649.1 L25.7,648.5 Z" fill="#00a4ef"/><path d="M30.799999999999997,643.8 L38.2,643.8 L38.2,650.3 L30.799999999999997,649.2 Z" fill="#ffb900"/><rect x="46.00" y="638.00" width="5" height="5" fill="#b4b0b4"/><rect x="51.00" y="638.00" width="5" height="5" fill="#c8bcb8"/><rect x="56.00" y="638.00" width="5" height="5" fill="#a8acb4"/><rect x="61.00" y="638.00" width="5" height="5" fill="#cccac4"/><rect x="66.00" y="638.00" width="5" height="5" fill="#c0c4c8"/><rect x="71.00" y="638.00" width="5" height="5" fill="#c0c4c8"/><rect x="46.00" y="643.00" width="5" height="5" fill="#d0c8c4"/><rect x="51.00" y="643.00" width="5" height="5" fill="#acaab0"/><rect x="56.00" y="643.00" width="5" height="5" fill="#a8aab4"/><rect x="61.00" y="643.00" width="5" height="5" fill="#e4e0dc"/><rect x="66.00" y="643.00" width="5" height="5" fill="#c0c4c8"/><rect x="71.00" y="643.00" width="5" height="5" fill="#c0c4c8"/><circle cx="549.85" cy="642.10" r="6.6" fill="#3fcb50"/><path d="M546.25,642.20 L549.05,645.00 L553.65,640.20" stroke="#fff" stroke-width="2" fill="none"/><circle cx="687.40" cy="649.60" r="6.6" fill="#3fcb50"/><path d="M683.80,649.70 L686.60,652.50 L691.20,647.70" stroke="#fff" stroke-width="2" fill="none"/><circle cx="838.80" cy="649.60" r="6.6" fill="#3fcb50"/><path d="M835.20,649.70 L838.00,652.50 L842.60,647.70" stroke="#fff" stroke-width="2" fill="none"/><circle cx="1430.30" cy="649.60" r="6.6" fill="#3fcb50"/><path d="M1426.70,649.70 L1429.50,652.50 L1434.10,647.70" stroke="#fff" stroke-width="2" fill="none"/><path d="M1607.40,650.50 Q1614.60,641.60 1621.80,650.50 Q1614.60,659.40 1607.40,650.50 Z" stroke="#b0281a" stroke-width="1.15" fill="none"/><circle cx="1614.60" cy="649.40" r="3.4" fill="#b0281a"/><path d="M1612.50,649.60 Q1612.50,647.20 1614.30,646.60" stroke="#fff" stroke-width="0.9" fill="none"/><path d="M1767,646.5 L1771.2,650.5 L1767,654.5 Z" fill="#666"/><path d="M25.7,681.5 L30.1,680.9 L30.1,686.0 L25.7,686.0 Z" fill="#f25022"/><path d="M30.799999999999997,680.8 L38.2,679.6 L38.2,686.0 L30.799999999999997,686.0 Z" fill="#7fba00"/><path d="M25.7,686.8 L30.1,686.8 L30.1,692.1 L25.7,691.5 Z" fill="#00a4ef"/><path d="M30.799999999999997,686.8 L38.2,686.8 L38.2,693.3 L30.799999999999997,692.2 Z" fill="#ffb900"/><rect x="47.00" y="682.00" width="5" height="5" fill="#b8b8bc"/><rect x="52.00" y="682.00" width="5" height="5" fill="#b8b0b4"/><rect x="57.00" y="682.00" width="5" height="5" fill="#c4c8c8"/><rect x="62.00" y="682.00" width="5" height="5" fill="#c0c0c0"/><rect x="67.00" y="682.00" width="5" height="5" fill="#c0c0c4"/><rect x="72.00" y="682.00" width="5" height="5" fill="#e0e4e8"/><rect x="47.00" y="687.00" width="5" height="5" fill="#c4c0c0"/><rect x="52.00" y="687.00" width="5" height="5" fill="#b8b4b8"/><rect x="57.00" y="687.00" width="5" height="5" fill="#c4c8c8"/><rect x="62.00" y="687.00" width="5" height="5" fill="#bcbcbc"/><rect x="67.00" y="687.00" width="5" height="5" fill="#c4c4c8"/><rect x="72.00" y="687.00" width="5" height="5" fill="#d4d8dc"/><circle cx="549.85" cy="685.10" r="6.6" fill="#3fcb50"/><path d="M546.25,685.20 L549.05,688.00 L553.65,683.20" stroke="#fff" stroke-width="2" fill="none"/><circle cx="671.25" cy="692.60" r="6.6" fill="#ff0000"/><path d="M668.45,690.00 L674.05,695.50 M674.05,690.00 L668.45,695.50" stroke="#fff" stroke-width="2" fill="none"/><circle cx="838.80" cy="692.60" r="6.6" fill="#3fcb50"/><path d="M835.20,692.70 L838.00,695.50 L842.60,690.70" stroke="#fff" stroke-width="2" fill="none"/><circle cx="1430.30" cy="692.60" r="6.6" fill="#3fcb50"/><path d="M1426.70,692.70 L1429.50,695.50 L1434.10,690.70" stroke="#fff" stroke-width="2" fill="none"/><path d="M1607.40,693.50 Q1614.60,684.60 1621.80,693.50 Q1614.60,702.40 1607.40,693.50 Z" stroke="#b0281a" stroke-width="1.15" fill="none"/><circle cx="1614.60" cy="692.40" r="3.4" fill="#b0281a"/><path d="M1612.50,692.60 Q1612.50,690.20 1614.30,689.60" stroke="#fff" stroke-width="0.9" fill="none"/><path d="M1767,689.5 L1771.2,693.5 L1767,697.5 Z" fill="#666"/><path d="M25.7,725.0 L30.1,724.4 L30.1,729.5 L25.7,729.5 Z" fill="#f25022"/><path d="M30.799999999999997,724.3 L38.2,723.1 L38.2,729.5 L30.799999999999997,729.5 Z" fill="#7fba00"/><path d="M25.7,730.3 L30.1,730.3 L30.1,735.6 L25.7,735.0 Z" fill="#00a4ef"/><path d="M30.799999999999997,730.3 L38.2,730.3 L38.2,736.8 L30.799999999999997,735.7 Z" fill="#ffb900"/><rect x="47.10" y="725.80" width="5" height="5" fill="#a8a8ac"/><rect x="52.10" y="725.80" width="5" height="5" fill="#b0a4a8"/><rect x="57.10" y="725.80" width="5" height="5" fill="#acacb0"/><rect x="62.10" y="725.80" width="5" height="5" fill="#b0b0b0"/><rect x="67.10" y="725.80" width="5" height="5" fill="#bcbcbc"/><rect x="72.10" y="725.80" width="5" height="5" fill="#c8d0d8"/><rect x="47.10" y="730.80" width="5" height="5" fill="#d0cccc"/><rect x="52.10" y="730.80" width="5" height="5" fill="#c4c4c8"/><rect x="57.10" y="730.80" width="5" height="5" fill="#d0d4d0"/><rect x="62.10" y="730.80" width="5" height="5" fill="#c8c4c8"/><rect x="67.10" y="730.80" width="5" height="5" fill="#dcdcdc"/><rect x="72.10" y="730.80" width="5" height="5" fill="#dcdce4"/><circle cx="549.85" cy="728.60" r="6.6" fill="#3fcb50"/><path d="M546.25,728.70 L549.05,731.50 L553.65,726.70" stroke="#fff" stroke-width="2" fill="none"/><circle cx="687.40" cy="736.10" r="6.6" fill="#3fcb50"/><path d="M683.80,736.20 L686.60,739.00 L691.20,734.20" stroke="#fff" stroke-width="2" fill="none"/><circle cx="838.80" cy="736.10" r="6.6" fill="#3fcb50"/><path d="M835.20,736.20 L838.00,739.00 L842.60,734.20" stroke="#fff" stroke-width="2" fill="none"/><circle cx="1430.30" cy="736.10" r="6.6" fill="#3fcb50"/><path d="M1426.70,736.20 L1429.50,739.00 L1434.10,734.20" stroke="#fff" stroke-width="2" fill="none"/><path d="M1607.40,737.00 Q1614.60,728.10 1621.80,737.00 Q1614.60,745.90 1607.40,737.00 Z" stroke="#b0281a" stroke-width="1.15" fill="none"/><circle cx="1614.60" cy="735.90" r="3.4" fill="#b0281a"/><path d="M1612.50,736.10 Q1612.50,733.70 1614.30,733.10" stroke="#fff" stroke-width="0.9" fill="none"/><path d="M1767,733.0 L1771.2,737.0 L1767,741.0 Z" fill="#666"/><path d="M25.7,768.0 L30.1,767.4 L30.1,772.5 L25.7,772.5 Z" fill="#f25022"/><path d="M30.799999999999997,767.3 L38.2,766.1 L38.2,772.5 L30.799999999999997,772.5 Z" fill="#7fba00"/><path d="M25.7,773.3 L30.1,773.3 L30.1,778.6 L25.7,778.0 Z" fill="#00a4ef"/><path d="M30.799999999999997,773.3 L38.2,773.3 L38.2,779.8 L30.799999999999997,778.7 Z" fill="#ffb900"/><rect x="47.10" y="768.00" width="5" height="5" fill="#c0b4b4"/><rect x="52.10" y="768.00" width="5" height="5" fill="#d0d4d4"/><rect x="57.10" y="768.00" width="5" height="5" fill="#c4c8cc"/><rect x="62.10" y="768.00" width="5" height="5" fill="#f4f8fc"/><rect x="67.10" y="768.00" width="5" height="5" fill="#d8d4d0"/><rect x="72.10" y="768.00" width="5" height="5" fill="#c8c0bc"/><rect x="77.10" y="768.00" width="5" height="5" fill="#b8bcc4"/><rect x="82.10" y="768.00" width="5" height="5" fill="#ccccc8"/><rect x="87.10" y="768.00" width="5" height="5" fill="#b8bcc4"/><rect x="92.10" y="768.00" width="5" height="5" fill="#e0dcd8"/><rect x="97.10" y="768.00" width="5" height="5" fill="#e8e8e8"/><rect x="102.10" y="768.00" width="5" height="5" fill="#a8b0bc"/><rect x="47.10" y="773.00" width="5" height="5" fill="#d0ccd0"/><rect x="52.10" y="773.00" width="5" height="5" fill="#c0bcbc"/><rect x="57.10" y="773.00" width="5" height="5" fill="#b8b4b0"/><rect x="62.10" y="773.00" width="5" height="5" fill="#d0d4dc"/><rect x="67.10" y="773.00" width="5" height="5" fill="#d4d4d4"/><rect x="72.10" y="773.00" width="5" height="5" fill="#c8c4c0"/><rect x="77.10" y="773.00" width="5" height="5" fill="#b8bcc8"/><rect x="82.10" y="773.00" width="5" height="5" fill="#ccccc4"/><rect x="87.10" y="773.00" width="5" height="5" fill="#b0b4b8"/><rect x="92.10" y="773.00" width="5" height="5" fill="#e0dcd8"/><rect x="97.10" y="773.00" width="5" height="5" fill="#d4d4d0"/><rect x="102.10" y="773.00" width="5" height="5" fill="#b0b4bc"/><circle cx="549.85" cy="771.60" r="6.6" fill="#3fcb50"/><path d="M546.25,771.70 L549.05,774.50 L553.65,769.70" stroke="#fff" stroke-width="2" fill="none"/><circle cx="687.40" cy="779.10" r="6.6" fill="#3fcb50"/><path d="M683.80,779.20 L686.60,782.00 L691.20,777.20" stroke="#fff" stroke-width="2" fill="none"/><circle cx="838.80" cy="779.10" r="6.6" fill="#3fcb50"/><path d="M835.20,779.20 L838.00,782.00 L842.60,777.20" stroke="#fff" stroke-width="2" fill="none"/><circle cx="1430.30" cy="779.10" r="6.6" fill="#3fcb50"/><path d="M1426.70,779.20 L1429.50,782.00 L1434.10,777.20" stroke="#fff" stroke-width="2" fill="none"/><path d="M1607.40,780.00 Q1614.60,771.10 1621.80,780.00 Q1614.60,788.90 1607.40,780.00 Z" stroke="#b0281a" stroke-width="1.15" fill="none"/><circle cx="1614.60" cy="778.90" r="3.4" fill="#b0281a"/><path d="M1612.50,779.10 Q1612.50,776.70 1614.30,776.10" stroke="#fff" stroke-width="0.9" fill="none"/><path d="M1767,776.0 L1771.2,780.0 L1767,784.0 Z" fill="#666"/><path d="M25.7,811.5 L30.1,810.9 L30.1,816.0 L25.7,816.0 Z" fill="#f25022"/><path d="M30.799999999999997,810.8 L38.2,809.6 L38.2,816.0 L30.799999999999997,816.0 Z" fill="#7fba00"/><path d="M25.7,816.8 L30.1,816.8 L30.1,822.1 L25.7,821.5 Z" fill="#00a4ef"/><path d="M30.799999999999997,816.8 L38.2,816.8 L38.2,823.3 L30.799999999999997,822.2 Z" fill="#ffb900"/><rect x="47.10" y="811.90" width="5" height="5" fill="#a8a4a8"/><rect x="52.10" y="811.90" width="5" height="5" fill="#b0aca8"/><rect x="57.10" y="811.90" width="5" height="5" fill="#d4d8dc"/><rect x="62.10" y="811.90" width="5" height="5" fill="#c4c4c8"/><rect x="67.10" y="811.90" width="5" height="5" fill="#b0aca8"/><rect x="72.10" y="811.90" width="5" height="5" fill="#c0c0c4"/><rect x="77.10" y="811.90" width="5" height="5" fill="#d4d4d8"/><rect x="47.10" y="816.90" width="5" height="5" fill="#d8d4d8"/><rect x="52.10" y="816.90" width="5" height="5" fill="#dcd8d4"/><rect x="57.10" y="816.90" width="5" height="5" fill="#d4d8dc"/><rect x="62.10" y="816.90" width="5" height="5" fill="#d4d4d8"/><rect x="67.10" y="816.90" width="5" height="5" fill="#d8d4d0"/><rect x="72.10" y="816.90" width="5" height="5" fill="#c8cccc"/><rect x="77.10" y="816.90" width="5" height="5" fill="#d4d4d8"/><circle cx="549.85" cy="815.10" r="6.6" fill="#3fcb50"/><path d="M546.25,815.20 L549.05,818.00 L553.65,813.20" stroke="#fff" stroke-width="2" fill="none"/><circle cx="687.40" cy="822.60" r="6.6" fill="#3fcb50"/><path d="M683.80,822.70 L686.60,825.50 L691.20,820.70" stroke="#fff" stroke-width="2" fill="none"/><circle cx="838.80" cy="822.60" r="6.6" fill="#3fcb50"/><path d="M835.20,822.70 L838.00,825.50 L842.60,820.70" stroke="#fff" stroke-width="2" fill="none"/><circle cx="1430.30" cy="822.60" r="6.6" fill="#3fcb50"/><path d="M1426.70,822.70 L1429.50,825.50 L1434.10,820.70" stroke="#fff" stroke-width="2" fill="none"/><path d="M1607.40,823.50 Q1614.60,814.60 1621.80,823.50 Q1614.60,832.40 1607.40,823.50 Z" stroke="#b0281a" stroke-width="1.15" fill="none"/><circle cx="1614.60" cy="822.40" r="3.4" fill="#b0281a"/><path d="M1612.50,822.60 Q1612.50,820.20 1614.30,819.60" stroke="#fff" stroke-width="0.9" fill="none"/><path d="M1767,819.5 L1771.2,823.5 L1767,827.5 Z" fill="#666"/></svg>
<div class="t" style="left:45.80px;top:438.51px;font-size:10.03px;line-height:10.03px;color:#353941;transform:scaleX(1.0181);">192.168.122.200</div>
<div class="t" style="left:495.75px;top:437.54px;font-size:11.30px;line-height:11.30px;color:#353941;transform:scaleX(1.0410);">23/04/2025 08:54:13</div>
<div class="t" style="left:699.30px;top:429.03px;font-size:11.77px;line-height:11.77px;color:#353941;transform:scaleX(0.9969);">Attivo</div>
<div class="t" style="left:850.60px;top:431.07px;font-size:10.31px;line-height:10.31px;color:#353941;transform:scaleX(1.0652);">v4.14.1</div>
<div class="t" style="left:1009.70px;top:430.44px;font-size:11.30px;line-height:11.30px;color:#353941;transform:scaleX(1.0622);">28/11/2025 10:22:00</div>
<div class="t" style="left:1213.80px;top:430.44px;font-size:11.30px;line-height:11.30px;color:#353941;transform:scaleX(1.0689);">28/11/2025 11:53:49</div>
<div class="t" style="left:1441.80px;top:430.44px;font-size:11.30px;line-height:11.30px;color:#353941;transform:scaleX(1.0048);">0 giorni</div>
<div class="t" style="left:45.96px;top:481.03px;font-size:10.03px;line-height:10.03px;color:#353941;transform:scaleX(0.9848);">10.0.6.184</div>
<div class="t" style="left:495.87px;top:480.62px;font-size:11.30px;line-height:11.30px;color:#353941;transform:scaleX(1.0503);">19/11/2025 15:24:56</div>
<div class="t" style="left:683.20px;top:473.57px;font-size:11.19px;line-height:11.19px;color:#353941;transform:scaleX(0.9517);">Disconnesso</div>
<div class="t" style="left:850.76px;top:474.07px;font-size:10.31px;line-height:10.31px;color:#353941;transform:scaleX(1.0507);">v4.14.1</div>
<div class="t" style="left:1009.30px;top:472.96px;font-size:11.30px;line-height:11.30px;color:#353941;transform:scaleX(1.0638);">19/11/2025 15:18:00</div>
<div class="t" style="left:1213.96px;top:472.96px;font-size:11.30px;line-height:11.30px;color:#353941;transform:scaleX(1.0673);">24/11/2025 16:11:08</div>
<div class="t" style="left:1441.48px;top:472.96px;font-size:11.30px;line-height:11.30px;color:#353941;">0 giorni</div>
<div class="t" style="left:45.80px;top:524.51px;font-size:10.03px;line-height:10.03px;color:#353941;transform:scaleX(1.0071);">10.0.6.195</div>
<div class="t" style="left:495.75px;top:523.54px;font-size:11.30px;line-height:11.30px;color:#353941;transform:scaleX(1.0410);">18/07/2025 09:37:51</div>
<div class="t" style="left:683.20px;top:516.73px;font-size:11.19px;line-height:11.19px;color:#353941;transform:scaleX(0.9479);">Disconnesso</div>
<div class="t" style="left:850.60px;top:517.07px;font-size:10.31px;line-height:10.31px;color:#353941;transform:scaleX(1.0652);">v4.14.1</div>
<div class="t" style="left:1009.70px;top:516.44px;font-size:11.30px;line-height:11.30px;color:#353941;transform:scaleX(1.0536);">18/07/2025 09:23:00</div>
<div class="t" style="left:1213.80px;top:516.44px;font-size:11.30px;line-height:11.30px;color:#353941;transform:scaleX(1.0602);">27/11/2025 22:45:30</div>
<div class="t" style="left:1441.80px;top:516.44px;font-size:11.30px;line-height:11.30px;color:#353941;transform:scaleX(1.0048);">0 giorni</div>
<div class="t" style="left:45.96px;top:567.93px;font-size:10.03px;line-height:10.03px;color:#353941;">10.0.6.176</div>
<div class="t" style="left:495.87px;top:566.72px;font-size:11.30px;line-height:11.30px;color:#353941;transform:scaleX(1.0418);">12/06/2025 09:22:20</div>
<div class="t" style="left:699.38px;top:558.13px;font-size:11.77px;line-height:11.77px;color:#353941;transform:scaleX(0.9826);">Attivo</div>
<div class="t" style="left:850.76px;top:560.17px;font-size:10.31px;line-height:10.31px;color:#353941;transform:scaleX(1.0507);">v4.14.1</div>
<div class="t" style="left:1009.30px;top:559.86px;font-size:11.30px;line-height:11.30px;color:#353941;transform:scaleX(1.0638);">10/11/2025 09:48:00</div>
<div class="t" style="left:1213.96px;top:559.86px;font-size:11.30px;line-height:11.30px;color:#353941;transform:scaleX(1.0673);">28/11/2025 11:53:21</div>
<div class="t" style="left:1441.48px;top:559.86px;font-size:11.30px;line-height:11.30px;color:#353941;">0 giorni</div>
<div class="t" style="left:45.80px;top:611.51px;font-size:10.03px;line-height:10.03px;color:#353941;transform:scaleX(1.0071);">10.0.6.156</div>
<div class="t" style="left:495.75px;top:610.54px;font-size:11.30px;line-height:11.30px;color:#353941;transform:scaleX(1.0581);">12/11/2025 10:09:11</div>
<div class="t" style="left:683.20px;top:603.73px;font-size:11.19px;line-height:11.19px;color:#353941;transform:scaleX(0.9479);">Disconnesso</div>
<div class="t" style="left:850.60px;top:604.07px;font-size:10.31px;line-height:10.31px;color:#353941;transform:scaleX(1.0652);">v4.14.1</div>
<div class="t" style="left:1010.50px;top:603.44px;font-size:11.30px;line-height:11.30px;color:#353941;transform:scaleX(1.0542);">05/11/2025 09:41:00</div>
<div class="t" style="left:1213.80px;top:603.44px;font-size:11.30px;line-height:11.30px;color:#353941;transform:scaleX(1.0602);">27/11/2025 13:01:35</div>
<div class="t" style="left:1441.80px;top:603.44px;font-size:11.30px;line-height:11.30px;color:#353941;transform:scaleX(1.0048);">0 giorni</div>
<div class="t" style="left:45.96px;top:653.93px;font-size:10.03px;line-height:10.03px;color:#353941;">10.0.6.160</div>
<div class="t" style="left:495.87px;top:652.72px;font-size:11.30px;line-height:11.30px;color:#353941;transform:scaleX(1.0503);">12/11/2025 08:39:13</div>
<div class="t" style="left:699.38px;top:644.13px;font-size:11.77px;line-height:11.77px;color:#353941;transform:scaleX(0.9826);">Attivo</div>
<div class="t" style="left:850.76px;top:646.17px;font-size:10.31px;line-height:10.31px;color:#353941;transform:scaleX(1.0507);">v4.14.1</div>
<div class="t" style="left:1009.30px;top:645.86px;font-size:11.30px;line-height:11.30px;color:#353941;transform:scaleX(1.0638);">18/11/2025 09:39:00</div>
<div class="t" style="left:1213.96px;top:645.86px;font-size:11.30px;line-height:11.30px;color:#353941;transform:scaleX(1.0673);">28/11/2025 11:53:39</div>
<div class="t" style="left:1441.48px;top:645.86px;font-size:11.30px;line-height:11.30px;color:#353941;">0 giorni</div>
<div class="t" style="left:45.80px;top:697.01px;font-size:10.03px;line-height:10.03px;color:#353941;transform:scaleX(1.0071);">10.0.6.163</div>
<div class="t" style="left:495.75px;top:696.04px;font-size:11.30px;line-height:11.30px;color:#353941;transform:scaleX(1.0410);">12/05/2025 13:37:28</div>
<div class="t" style="left:683.20px;top:688.43px;font-size:11.19px;line-height:11.19px;color:#353941;transform:scaleX(0.9479);">Disconnesso</div>
<div class="t" style="left:850.60px;top:689.57px;font-size:10.31px;line-height:10.31px;color:#353941;transform:scaleX(1.0652);">v4.14.1</div>
<div class="t" style="left:1009.70px;top:688.94px;font-size:11.30px;line-height:11.30px;color:#353941;transform:scaleX(1.0622);">20/11/2025 12:23:00</div>
<div class="t" style="left:1213.80px;top:688.94px;font-size:11.30px;line-height:11.30px;color:#353941;transform:scaleX(1.0602);">20/11/2025 13:48:39</div>
<div class="t" style="left:1441.80px;top:688.94px;font-size:11.30px;line-height:11.30px;color:#353941;transform:scaleX(1.0048);">0 giorni</div>
<div class="t" style="left:45.96px;top:740.03px;font-size:10.03px;line-height:10.03px;color:#353941;">10.0.6.170</div>
<div class="t" style="left:495.87px;top:739.62px;font-size:11.30px;line-height:11.30px;color:#353941;transform:scaleX(1.0418);">23/04/2025 08:54:13</div>
<div class="t" style="left:699.38px;top:731.03px;font-size:11.77px;line-height:11.77px;color:#353941;transform:scaleX(0.9826);">Attivo</div>
<div class="t" style="left:850.76px;top:733.07px;font-size:10.31px;line-height:10.31px;color:#353941;transform:scaleX(1.0507);">v4.14.1</div>
<div class="t" style="left:1009.30px;top:731.96px;font-size:11.30px;line-height:11.30px;color:#353941;transform:scaleX(1.0638);">28/11/2025 10:22:00</div>
<div class="t" style="left:1213.96px;top:731.96px;font-size:11.30px;line-height:11.30px;color:#353941;transform:scaleX(1.0673);">28/11/2025 11:53:49</div>
<div class="t" style="left:1441.48px;top:731.96px;font-size:11.30px;line-height:11.30px;color:#353941;">0 giorni</div>
<div class="t" style="left:45.80px;top:783.51px;font-size:10.03px;line-height:10.03px;color:#353941;transform:scaleX(0.9953);">10.0.7.10</div>
<div class="t" style="left:495.75px;top:782.54px;font-size:11.30px;line-height:11.30px;color:#353941;transform:scaleX(1.0333);">23/04/2025 08:54:14</div>
<div class="t" style="left:699.30px;top:774.03px;font-size:11.77px;line-height:11.77px;color:#353941;transform:scaleX(0.9969);">Attivo</div>
<div class="t" style="left:850.60px;top:776.07px;font-size:10.31px;line-height:10.31px;color:#353941;transform:scaleX(1.0652);">v4.14.1</div>
<div class="t" style="left:1009.70px;top:775.44px;font-size:11.30px;line-height:11.30px;color:#353941;transform:scaleX(1.0622);">28/11/2025 10:22:00</div>
<div class="t" style="left:1213.80px;top:775.44px;font-size:11.30px;line-height:11.30px;color:#353941;transform:scaleX(1.0689);">28/11/2025 11:53:49</div>
<div class="t" style="left:1441.80px;top:775.44px;font-size:11.30px;line-height:11.30px;color:#353941;transform:scaleX(1.0048);">0 giorni</div>
<div class="t" style="left:45.96px;top:826.93px;font-size:10.03px;line-height:10.03px;color:#353941;transform:scaleX(1.0181);">192.168.122.201</div>
<div class="t" style="left:495.87px;top:825.72px;font-size:11.30px;line-height:11.30px;color:#353941;transform:scaleX(1.0340);">23/04/2025 08:54:14</div>
<div class="t" style="left:699.38px;top:817.13px;font-size:11.77px;line-height:11.77px;color:#353941;transform:scaleX(0.9826);">Attivo</div>
<div class="t" style="left:850.76px;top:819.17px;font-size:10.31px;line-height:10.31px;color:#353941;transform:scaleX(1.0507);">v4.14.1</div>
<div class="t" style="left:1009.30px;top:818.86px;font-size:11.30px;line-height:11.30px;color:#353941;transform:scaleX(1.0638);">28/11/2025 10:22:00</div>
<div class="t" style="left:1213.96px;top:818.86px;font-size:11.30px;line-height:11.30px;color:#353941;transform:scaleX(1.0673);">28/11/2025 11:53:49</div>
<div class="t" style="left:1441.48px;top:818.86px;font-size:11.30px;line-height:11.30px;color:#353941;">0 giorni</div>
</body></html>
